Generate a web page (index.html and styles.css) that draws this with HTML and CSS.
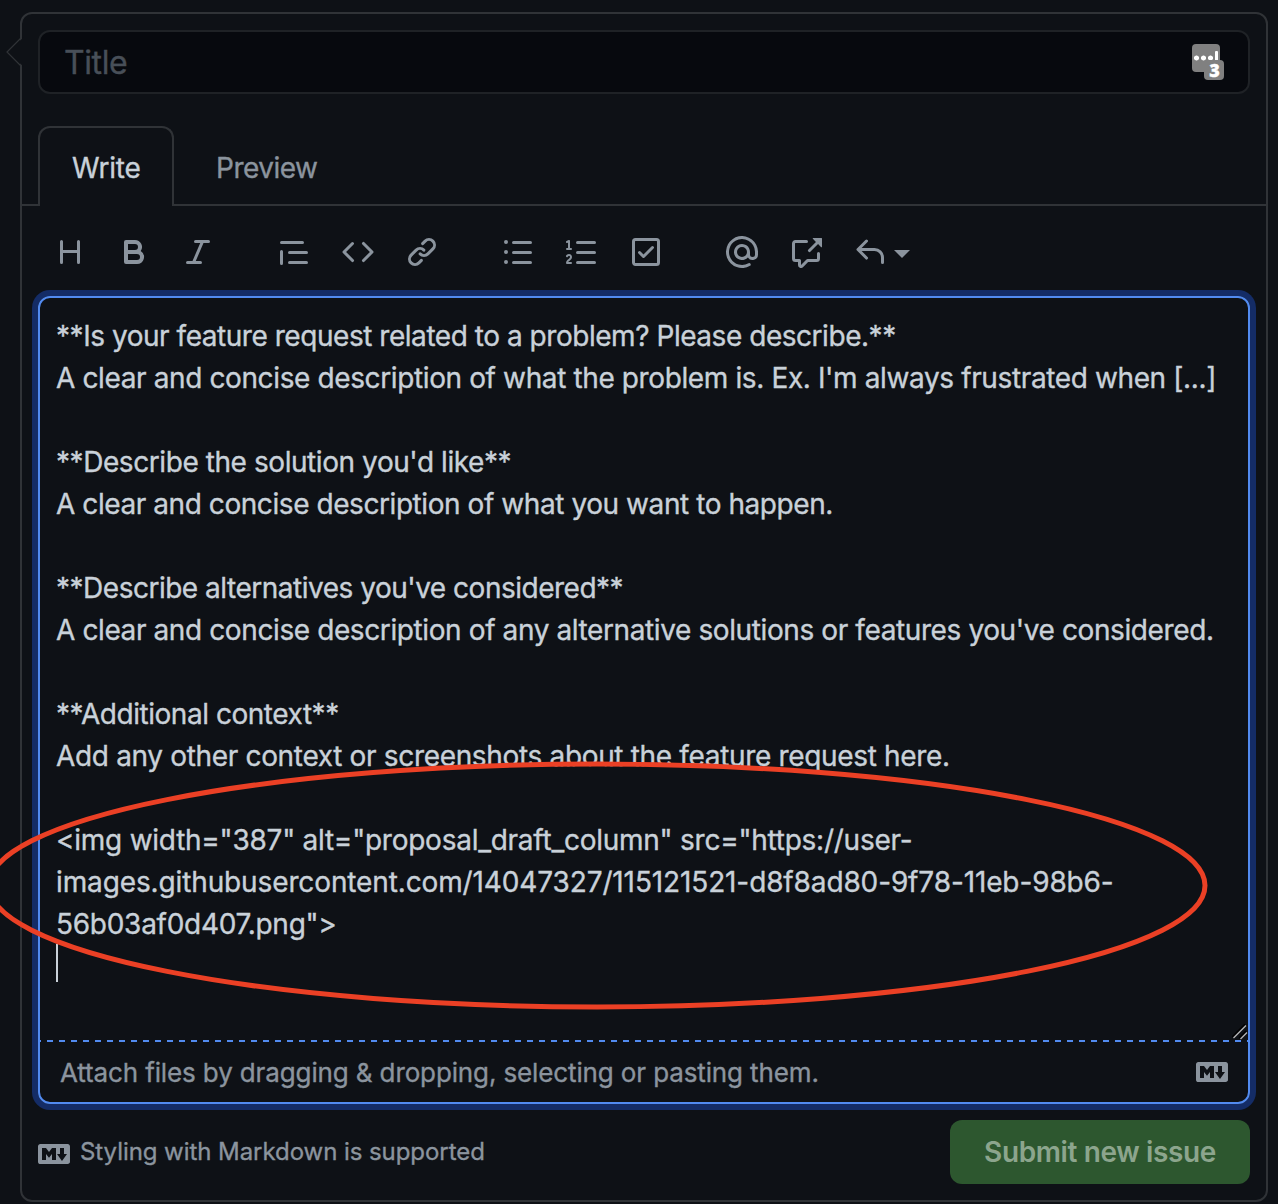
FILE: index.html
```html
<!DOCTYPE html>
<html lang="en">
<head>
<meta charset="utf-8">
<title>New issue</title>
<link rel="stylesheet" href="styles.css">
</head>
<body>
<main class="card">
  <svg class="pointer" viewBox="0 0 18 32"><path class="pointer-fill" d="M18 1 1.5 16 18 31z"/><path class="pointer-line" d="M15.5 1.500 1 16 15.500 30.500"/></svg>

  <div class="title-field">
    <span class="placeholder">Title</span>
    <span class="extension"><i class="dots"></i><i class="bar"></i><b class="count">3</b></span>
  </div>

  <nav class="tabs">
    <span class="tab tab-active"><span class="t-write">Write</span></span>
    <span class="tab"><span class="t-preview">Preview</span></span>
  </nav>

  <div class="toolbar">
    <div class="group">
      <svg class="icon" viewBox="0 0 16 16"><path d="M3.750 2a.75.75 0 01.75.75V7h7V2.750a.75.75 0 011.500 0v10.500a.75.75 0 01-1.500 0V8.500h-7v4.750a.75.75 0 01-1.500 0V2.750A.75.75 0 013.750 2z"/></svg>
      <svg class="icon" viewBox="0 0 16 16"><path fill-rule="evenodd" d="M4 2a1 1 0 00-1 1v10a1 1 0 001 1h5.500a3.500 3.500 0 001.852-6.470A3.500 3.500 0 008.500 2H4zm4.500 5a1.500 1.500 0 100-3H5v3h3.500zM5 9v3h4.500a1.500 1.500 0 000-3H5z"/></svg>
      <svg class="icon" viewBox="0 0 16 16"><path d="M6 2.750A.75.75 0 016.750 2h6.500a.75.75 0 010 1.500h-2.505l-3.858 9H9.250a.75.75 0 010 1.500h-6.500a.75.75 0 010-1.500h2.505l3.858-9H6.750A.75.75 0 016 2.750z"/></svg>
    </div>
    <div class="group">
      <svg class="icon" viewBox="0 0 16 16"><path d="M1.750 2.500a.75.75 0 000 1.500h10.500a.75.75 0 000-1.500H1.750zm4 5a.75.75 0 000 1.500h8.500a.75.75 0 000-1.500h-8.500zm0 5a.75.75 0 000 1.500h8.500a.75.75 0 000-1.500h-8.500zM2.500 7.750a.75.75 0 00-1.500 0v6a.75.75 0 001.500 0v-6z"/></svg>
      <svg class="icon" viewBox="0 0 16 16"><path d="M4.720 3.220a.75.75 0 011.060 1.060L2.060 8l3.720 3.720a.75.75 0 11-1.060 1.060L.47 8.530a.75.75 0 010-1.060l4.250-4.250zm6.560 0a.75.75 0 10-1.060 1.060L13.940 8l-3.720 3.720a.75.75 0 101.060 1.060l4.250-4.250a.75.75 0 000-1.060l-4.250-4.250z"/></svg>
      <svg class="icon" viewBox="0 0 16 16"><path d="M7.775 3.275a.75.75 0 001.060 1.060l1.250-1.250a2 2 0 112.830 2.830l-2.500 2.500a2 2 0 01-2.830 0 .75.75 0 00-1.060 1.060 3.500 3.500 0 004.950 0l2.500-2.500a3.500 3.500 0 00-4.950-4.950l-1.250 1.250zm-4.690 9.640a2 2 0 010-2.830l2.500-2.500a2 2 0 012.830 0 .75.75 0 001.060-1.060 3.500 3.500 0 00-4.950 0l-2.500 2.500a3.500 3.500 0 004.950 4.950l1.250-1.250a.75.75 0 00-1.060-1.060l-1.250 1.250a2 2 0 01-2.830 0z"/></svg>
    </div>
    <div class="group">
      <svg class="icon" viewBox="0 0 16 16"><path d="M2 4a1 1 0 100-2 1 1 0 000 2zm3.750-1.500a.75.75 0 000 1.500h8.500a.75.75 0 000-1.500h-8.500zm0 5a.75.75 0 000 1.500h8.500a.75.75 0 000-1.500h-8.500zm0 5a.75.75 0 000 1.500h8.500a.75.75 0 000-1.500h-8.500zM3 8a1 1 0 11-2 0 1 1 0 012 0zm-1 6a1 1 0 100-2 1 1 0 000 2z"/></svg>
      <svg class="icon" viewBox="0 0 16 16"><path d="M2.003 2.500a.5.5 0 00-.723-.447l-1.003.5a.5.5 0 00.446.895l.28-.14V6H.5a.5.5 0 000 1h2.006a.5.5 0 100-1h-.503V2.500zM5 3.250a.75.75 0 01.75-.75h8.500a.75.75 0 010 1.500h-8.500A.75.75 0 015 3.250zm0 5a.75.75 0 01.75-.75h8.500a.75.75 0 010 1.500h-8.500A.75.75 0 015 8.250zm0 5a.75.75 0 01.75-.75h8.500a.75.75 0 010 1.500h-8.500a.75.75 0 01-.75-.75zM.924 10.320l.003-.004a.851.851 0 01.144-.153A.66.66 0 011.500 10c.195 0 .306.068.374.146a.57.57 0 01.128.376c0 .453-.269.682-.8 1.078l-.035.025C.692 11.980 0 12.495 0 13.500a.5.5 0 00.5.5h2.003a.5.5 0 000-1H1.146c.132-.197.351-.372.654-.597l.047-.035c.47-.35 1.156-.858 1.156-1.845 0-.365-.118-.744-.377-1.038-.268-.303-.658-.484-1.126-.484-.48 0-.84.202-1.068.392a1.858 1.858 0 00-.348.384l-.010.018a.5.5 0 00.851.525z"/></svg>
      <svg class="icon" viewBox="0 0 16 16"><path fill-rule="evenodd" d="M2.500 2.750a.25.25 0 01.25-.25h10.500a.25.25 0 01.25.25v10.500a.25.25 0 01-.25.25H2.750a.25.25 0 01-.25-.25V2.750zM2.750 1A1.750 1.750 0 001 2.750v10.500c0 .966.784 1.750 1.750 1.750h10.500A1.750 1.750 0 0015 13.250V2.750A1.750 1.750 0 0013.250 1H2.750zm9.030 5.280a.75.75 0 00-1.060-1.060L6.750 9.190 5.280 7.720a.75.75 0 00-1.060 1.060l2 2a.75.75 0 001.060 0l4.500-4.500z"/></svg>
    </div>
    <div class="group">
      <svg class="icon" viewBox="0 0 16 16"><path fill-rule="evenodd" d="M4.750 2.370a6.500 6.500 0 006.500 11.260.75.75 0 01.75 1.298 8 8 0 113.994-7.273.754.754 0 01.006.095v1.500a2.750 2.750 0 01-5.072 1.475A4 4 0 1112 8v1.250a1.250 1.250 0 002.500 0V7.867a6.500 6.500 0 00-9.750-5.496V2.370zM10.500 8a2.500 2.500 0 10-5 0 2.500 2.500 0 005 0z"/></svg>
      <svg class="icon" viewBox="0 0 16 16"><path d="M16 1.250v4.146a.25.25 0 01-.427.177L14.030 4.030l-3.750 3.750a.75.75 0 11-1.060-1.060l3.750-3.750-1.543-1.543A.25.25 0 0111.604 1h4.146a.25.25 0 01.25.25zM2.750 3.500a.25.25 0 00-.25.25v7.500c0 .138.112.25.25.25h2a.75.75 0 01.75.75v2.190l2.720-2.720a.75.75 0 01.53-.22h4.500a.25.25 0 00.25-.25v-2.500a.75.75 0 111.500 0v2.500A1.750 1.750 0 0113.250 13H9.060l-2.573 2.573A1.457 1.457 0 014 14.543V13H2.750A1.750 1.750 0 011 11.250v-7.500C1 2.784 1.784 2 2.750 2h5.500a.75.75 0 010 1.500h-5.500z"/></svg>
      <span class="reply"><svg class="icon" viewBox="0 0 16 16"><path d="M6.780 1.970a.75.75 0 010 1.060L3.810 6h6.440A4.750 4.750 0 0115 10.750v2.500a.75.75 0 01-1.500 0v-2.500a3.250 3.250 0 00-3.250-3.250H3.810l2.970 2.970a.75.75 0 11-1.060 1.060L1.470 7.280a.75.75 0 010-1.060l4.250-4.250a.75.75 0 011.060 0z"/></svg><i class="caret-down"></i></span>
    </div>
  </div>

  <section class="editor">
    <div class="text">
      <p><span class="l1">**Is your feature request related to a problem? Please describe.**</span></p>
      <p><span class="l2">A clear and concise description of what the problem is. Ex. I'm always frustrated when [...]</span></p>
      <p></p>
      <p><span class="l3">**Describe the solution you'd like**</span></p>
      <p><span class="l4">A clear and concise description of what you want to happen.</span></p>
      <p></p>
      <p><span class="l5">**Describe alternatives you've considered**</span></p>
      <p><span class="l6">A clear and concise description of any alternative solutions or features you've considered.</span></p>
      <p></p>
      <p><span class="l7">**Additional context**</span></p>
      <p><span class="l8">Add any other context or screenshots about the feature request here.</span></p>
      <p></p>
      <p><span class="l9">&lt;img width="387" alt="proposal_draft_column" src="https://user-</span></p>
      <p><span class="l10">images.githubusercontent.com/14047327/115121521-d8f8ad80-9f78-11eb-98b6-</span></p>
      <p><span class="l11">56b03af0d407.png"&gt;</span></p>
      <p class="cursor-line"><i class="cursor"></i></p>
      <svg class="resizer" viewBox="0 0 16 16"><path class="grip-shade" d="M0 13 13 0M7 14 14 7"/><path class="grip" d="M1.500 14 14 1.500M8.500 15 15 8.500"/></svg>
    </div>
    <div class="attach">
      <span class="l-attach">Attach files by dragging &amp; dropping, selecting or pasting them.</span>
      <svg class="icon" viewBox="0 0 16 16"><path fill-rule="evenodd" d="M14.850 3H1.150C.52 3 0 3.520 0 4.150v7.690C0 12.480.52 13 1.150 13h13.690c.64 0 1.150-.52 1.150-1.150v-7.700C16 3.520 15.480 3 14.850 3zM9 11H7V8L5.500 9.920 4 8v3H2V5h2l1.500 2L7 5h2v6zm2.990.5L9.500 8H11V5h2v3h1.500l-2.510 3.500z"/></svg>
    </div>
  </section>

  <footer class="footer">
    <div class="styling">
      <svg class="icon" viewBox="0 0 16 16"><path fill-rule="evenodd" d="M14.850 3H1.150C.52 3 0 3.520 0 4.150v7.690C0 12.480.52 13 1.150 13h13.690c.64 0 1.150-.52 1.150-1.150v-7.700C16 3.520 15.480 3 14.850 3zM9 11H7V8L5.500 9.920 4 8v3H2V5h2l1.500 2L7 5h2v6zm2.990.5L9.500 8H11V5h2v3h1.500l-2.510 3.500z"/></svg>
      <span class="l-styling">Styling with Markdown is supported</span>
    </div>
    <button class="submit"><span class="l-submit">Submit new issue</span></button>
  </footer>
</main>
<svg class="annotation" viewBox="0 0 1278 1204"><ellipse cx="597" cy="885.500" rx="608" ry="121.500"/></svg>
</body>
</html>
```
FILE: styles.css
```css
* { box-sizing: border-box; }

body {
  margin: 0;
  height: 1204px;
  padding: 12px 10px 2px 20px;
  overflow: hidden;
  background: #0e1116;
  color: #c9d1d9;
  font-family: Inter, "Liberation Sans", sans-serif;
  font-size: 28px;
  line-height: 42px;
  -webkit-text-stroke: 0.35px currentColor;
}

span { white-space: nowrap; }

.card {
  position: relative;
  height: 1190px;
  border: 2px solid #303337;
  border-radius: 12px;
}

.pointer { position: absolute; left: -16px; top: 22px; width: 18px; height: 32px; }
.pointer-fill { fill: #0e1116; }
.pointer-line { fill: none; stroke: #303337; stroke-width: 1.2; }

.title-field {
  display: flex;
  justify-content: space-between;
  align-items: center;
  height: 64px;
  margin: 16px 16px 0;
  padding: 0 24px 0 24px;
  border: 2px solid #1f2226;
  border-radius: 12px;
  background: #07090e;
}
.placeholder { padding-top: 2px; color: #484f58; font-size: 32px; letter-spacing: -0.4px; }

.extension { position: relative; width: 32px; height: 36px; }
.extension::before {
  content: "";
  display: block;
  width: 28px;
  height: 28px;
  border-radius: 4px;
  background: #808080;
}
.dots {
  position: absolute;
  left: 2px;
  top: 11px;
  width: 21px;
  height: 6px;
  background: radial-gradient(circle at 2.500px 3px, #fff 2.200px, transparent 2.800px) 0 0 / 7px 6px;
}
.bar { position: absolute; left: 23px; top: 7px; width: 3px; height: 10px; border-radius: 1px; background: #fff; }
.count {
  position: absolute;
  left: 12px;
  top: 16px;
  width: 20px;
  height: 20px;
  padding-left: 1px;
  border-radius: 4px;
  background: #808080;
  color: #fff;
  font: 800 18px/21px "Open Sans", sans-serif;
  text-align: center;
}

.tabs {
  display: flex;
  height: 80px;
  margin-top: 32px;
}
.tabs::before { content: ""; width: 16px; border-bottom: 2px solid #303337; }
.tabs::after { content: ""; flex: 1; border-bottom: 2px solid #303337; }
.tab {
  padding: 21px 0 0 42px;
  border-bottom: 2px solid #303337;
  color: #8b949e;
}
.tab-active {
  width: 136px;
  padding: 19px 0 0 32px;
  border: 2px solid #303337;
  border-bottom: 0;
  border-radius: 12px 12px 0 0;
  color: #c9d1d9;
}
.t-write { letter-spacing: -0.2px; }
.t-preview { letter-spacing: -0.5px; }

.toolbar { display: flex; gap: 64px; height: 90px; padding: 30px 32px 0; }
.group { display: flex; gap: 32px; }
.icon { display: block; flex: none; width: 32px; height: 32px; fill: #8b949e; }
.reply { display: flex; }
.caret-down {
  width: 16px;
  height: 8px;
  margin: 14px 0 0 8px;
  background: #8b949e;
  clip-path: polygon(0 0, 100% 0, 50% 100%);
}

.editor {
  height: 808px;
  margin: 0 16px;
  border: 2px solid #528bf0;
  border-radius: 12px;
  box-shadow: 0 0 0 6px #142c66;
}
.text { position: relative; height: 742px; padding: 17px 16px 0; }
.text p { height: 42px; margin: 0; }
.l1 { letter-spacing: -0.460px; }
.l2 { letter-spacing: -0.380px; }
.l3 { letter-spacing: -0.430px; }
.l4 { letter-spacing: -0.430px; }
.l5 { letter-spacing: -0.490px; }
.l6 { letter-spacing: -0.395px; }
.l7 { letter-spacing: -0.460px; }
.l8 { letter-spacing: -0.335px; }
.l9 { letter-spacing: -0.250px; }
.l10 { letter-spacing: -0.125px; }
.l11 { letter-spacing: -0.270px; }
.text .cursor-line { margin-top: -1px; }
.cursor { display: block; width: 2px; height: 38px; background: #c9d1d9; }
.resizer { position: absolute; right: 0; bottom: 0; width: 16px; height: 16px; fill: none; }
.grip { stroke: #b4b4b4; stroke-width: 1.300; }
.grip-shade { stroke: #000; stroke-width: 1.300; }

.attach {
  display: flex;
  justify-content: space-between;
  height: 62px;
  padding: 12px 20px 0;
  background: repeating-linear-gradient(90deg, #528bf0 0 6px, transparent 6px 12px) -5px 0 / 1220px 2px no-repeat;
  color: #8b949e;
  font-size: 26px;
}
.l-attach { letter-spacing: -0.125px; }
.attach .icon { margin-top: 4px; }

.footer { display: flex; justify-content: space-between; padding: 16px 16px 0; }
.styling { display: flex; gap: 10px; padding-top: 11px; color: #8b949e; font-size: 24px; }
.styling .icon { margin-top: 7px; }
.l-styling { letter-spacing: -0.060px; }
.submit {
  width: 300px;
  height: 64px;
  padding: 0;
  border: 0;
  border-radius: 12px;
  background: #2d572f;
  color: #8ca58d;
  font: 600 28px/42px Inter, sans-serif;
  letter-spacing: -0.380px;
  -webkit-text-stroke: 0;
}

.annotation { position: absolute; left: 0; top: 0; width: 1278px; height: 1204px; fill: none; stroke: #eb4025; stroke-width: 5; }
```
